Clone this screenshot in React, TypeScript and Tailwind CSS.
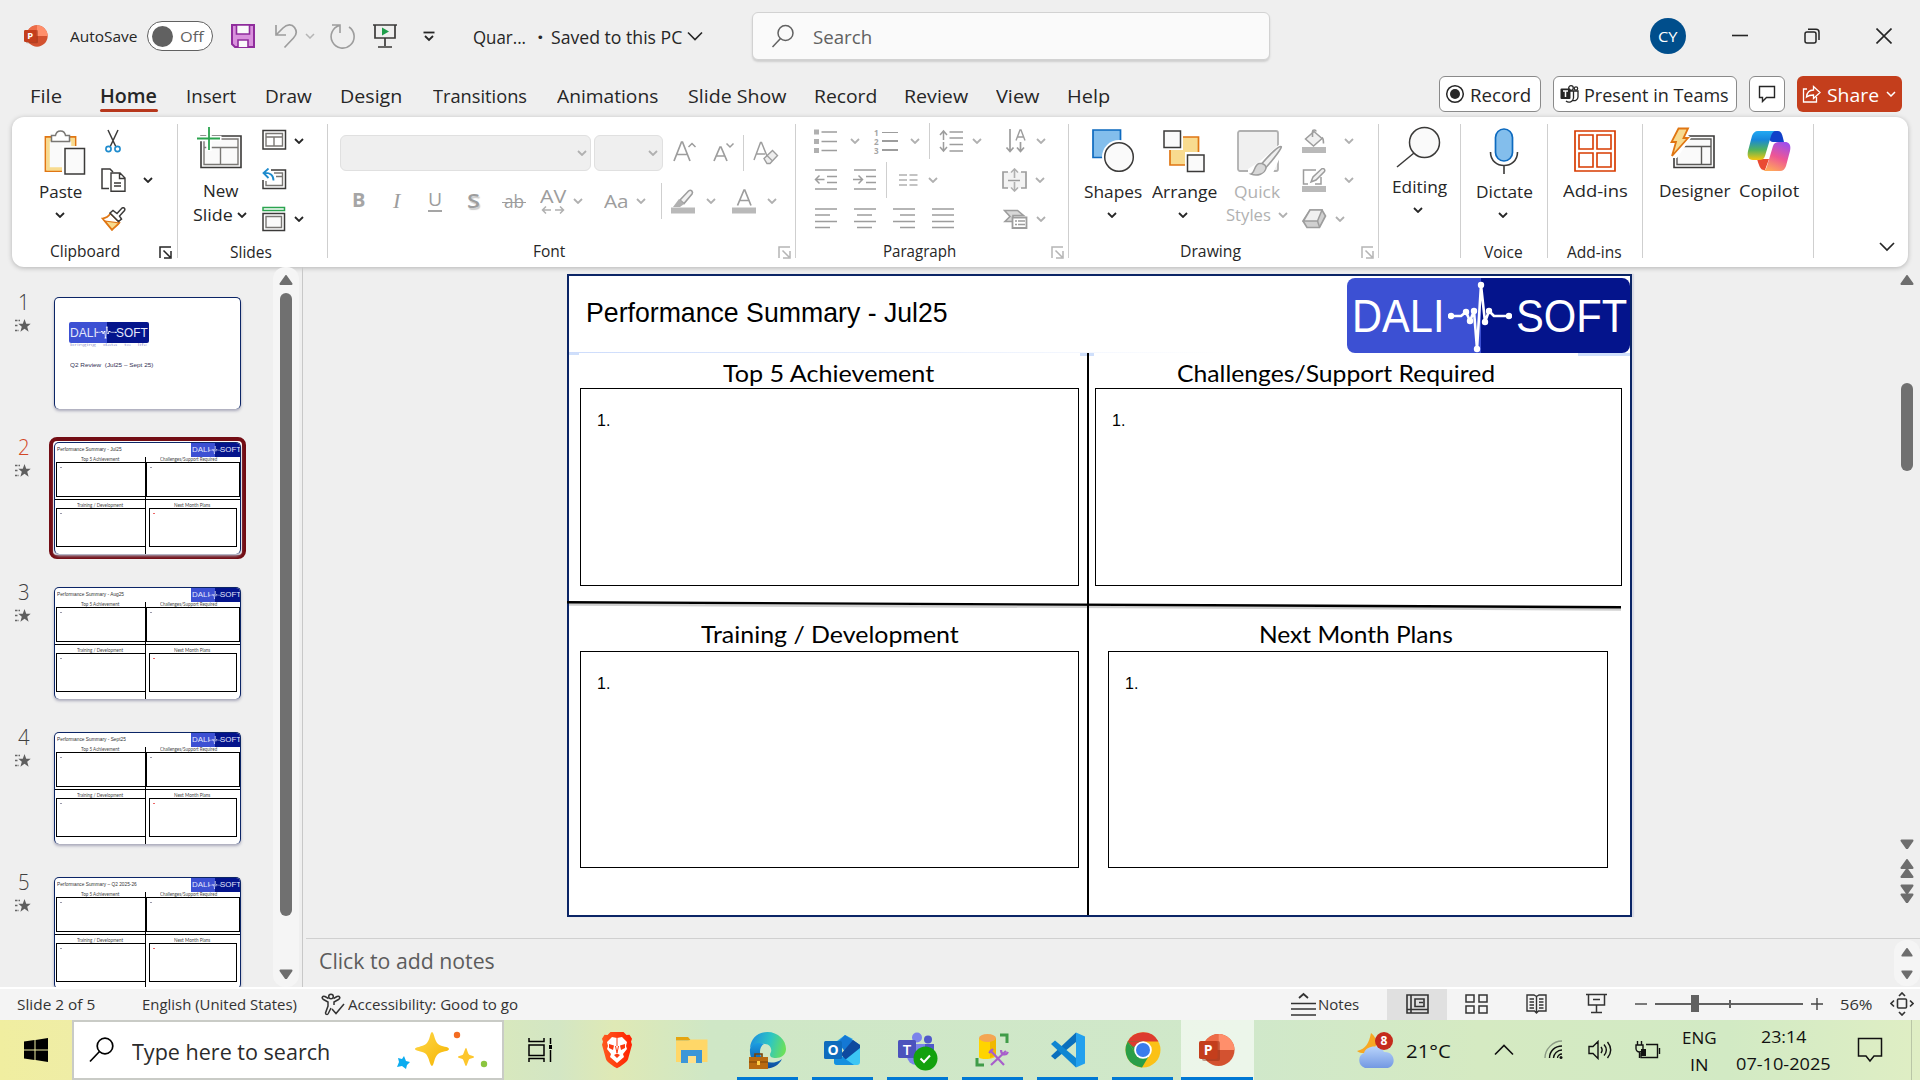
import { useLayoutEffect, useRef, useState, type ReactNode } from 'react';

/* Single line of text stretched or squeezed to the width of its box. */
function Fit({ t, c }: { t: string; c: string }) {
  const outer = useRef<HTMLSpanElement>(null);
  const inner = useRef<HTMLSpanElement>(null);
  const [s, setS] = useState(1);
  useLayoutEffect(() => {
    if (outer.current && inner.current) {
      setS((outer.current.clientWidth + 2) / inner.current.offsetWidth);
    }
  }, [t]);
  return (
    <span ref={outer} className={`block shrink-0 whitespace-pre ${c}`}>
      <span ref={inner} className="-ml-px inline-block origin-left" style={{ transform: `scaleX(${s})` }}>
        {t}
      </span>
    </span>
  );
}

function Svg({ w, h, c = '', children }: { w: number; h: number; c?: string; children: ReactNode }) {
  return (
    <svg width={w} height={h} viewBox={`0 0 ${w} ${h}`} className={`shrink-0 ${c}`} fill="none">
      {children}
    </svg>
  );
}

const DK = '#3b3a39';
const GR = '#9d9d9d';

function Chev({ c = '', g = false }: { c?: string; g?: boolean }) {
  return (
    <Svg w={10} h={6} c={c}>
      <path d="M1 1l4 4 4-4" stroke={g ? '#b0b0b0' : '#262626'} strokeWidth="1.8" />
    </Svg>
  );
}

function Launch({ c, g = false }: { c: string; g?: boolean }) {
  return (
    <Svg w={13} h={13} c={c}>
      <path d="M1 12V1h11M4.500 4.500l6.500 6.500M12 5v7H5" stroke={g ? '#b5b5b5' : '#262626'} strokeWidth="1.500" />
    </Svg>
  );
}

function Sep() {
  return <div className="mt-[7px] h-[134px] w-px shrink-0 bg-[#cfcfcf]" />;
}

const T17 = 'text-[17px] leading-6';
const LABEL = 'text-[15.5px] leading-[22px]';

function PptLogo({ w }: { w: number }) {
  return (
    <svg width={w} height={w} viewBox="0 0 36 36" className="shrink-0">
      <circle cx="19.500" cy="18" r="16" fill="#d35230" />
      <path d="M19.500 2a16 16 0 0 0-16 16h16z" fill="#ed6c47" />
      <path d="M19.500 2a16 16 0 0 1 16 16h-16z" fill="#ff8f6b" />
      <rect x="3" y="9" width="18" height="20" rx="2" fill="#8f2a12" opacity=".45" />
      <rect x="0" y="9" width="18.500" height="18" rx="1.800" fill="#c43e1c" />
      <text x="9.200" y="23" textAnchor="middle" fontSize="14" fontWeight="700" fill="#fff" fontFamily="Open Sans, sans-serif">P</text>
    </svg>
  );
}

function TitleBar() {
  return (
    <header className="flex h-[72px] items-center">
      <div className="ml-6"><PptLogo w={24} /></div>
      <Fit t="AutoSave" c="ml-[23px] w-[66px] text-[15px] leading-6 text-[#262626]" />
      <div className="ml-2.5 flex h-[30px] w-[66px] shrink-0 items-center rounded-full border border-[#616161] bg-white pl-1">
        <div className="size-[21px] rounded-full bg-[#616161]" />
        <Fit t="Off" c="ml-2 w-[22px] text-[15px] leading-6 text-[#616161]" />
      </div>
      <Svg w={26} h={26} c="ml-[17px]">
        <path d="M2 2h22v22H5l-3-3z" fill="#d991dd" stroke="#8f2d9c" strokeWidth="2" />
        <path d="M6.500 2h13v9h-13z" fill="#fafafa" stroke="#8f2d9c" strokeWidth="1.600" />
        <path d="M8 24v-7h10v7" fill="#fafafa" stroke="#8f2d9c" strokeWidth="1.600" />
      </Svg>
      <Svg w={24} h={26} c="ml-[18px]">
        <path d="M2 2v10h10M2.500 11.500L9 5c4-4 9-4 11.500-.500 2.500 3.500 2 7.500-1 10.500L10.500 24.500" stroke={GR} strokeWidth="1.700" />
      </Svg>
      <Svg w={10} h={6} c="ml-[7px]"><path d="M1 1l4 4 4-4" stroke="#b5b5b5" strokeWidth="1.500" /></Svg>
      <Svg w={26} h={26} c="ml-[15px]">
        <path d="M2 2h8v8M9.500 2.500A11.500 11.500 0 1 0 19 4" stroke={GR} strokeWidth="1.600" />
      </Svg>
      <Svg w={26} h={26} c="ml-[16px]">
        <path d="M1 2h24M3 2v13h20V2M13 15v8M6 24h14" stroke={DK} strokeWidth="1.700" />
        <path d="M10 4.500l7 4-7 4z" fill="#1e9e4a" />
      </Svg>
      <Svg w={12} h={12} c="ml-[25px]">
        <path d="M0.500 2.500h11" stroke="#262626" strokeWidth="1.800" /><path d="M2 6l4 4 4-4" stroke="#262626" strokeWidth="1.800" />
      </Svg>
      <Fit t="Quar..." c="ml-[39px] mt-px w-[51px] text-[17.5px] leading-6 text-[#262626]" />
      <Fit t="•" c="ml-[13px] mt-px w-[5px] text-[15px] leading-6 text-[#262626]" />
      <Fit t="Saved to this PC" c="ml-[9px] mt-px w-[129px] text-[17.5px] leading-6 text-[#262626]" />
      <Svg w={16} h={10} c="ml-[6px]"><path d="M1 1.500l7 7 7-7" stroke="#262626" strokeWidth="1.600" /></Svg>
      <div className="ml-[49px] flex h-12 w-[518px] shrink-0 items-center rounded-md border border-[#d2d2d2] bg-[#fafafa] shadow-[0_2px_2px_#cfcfcf]">
        <Svg w={24} h={24} c="ml-[18px]">
          <circle cx="14.500" cy="9" r="7.500" stroke="#616161" strokeWidth="1.500" /><path d="M9.500 14.500l-8 8.500" stroke="#616161" strokeWidth="1.500" />
        </Svg>
        <Fit t="Search" c="ml-[19px] mt-px w-[57px] text-[19px] leading-7 text-[#616161]" />
      </div>
      <div className="ml-[380px] flex size-9 shrink-0 items-center justify-center rounded-full bg-[#004e8c]">
        <Fit t="CY" c="w-[18px] text-[14px] text-white" />
      </div>
      <Svg w={16} h={16} c="ml-[46px]"><path d="M0 7.500h16" stroke="#262626" strokeWidth="1.600" /></Svg>
      <Svg w={16} h={16} c="ml-[56px]">
        <rect x="1" y="4" width="11" height="11" rx="2" stroke="#262626" strokeWidth="1.500" /><path d="M4 1.200h8a3 3 0 0 1 3 3V12" stroke="#262626" strokeWidth="1.500" />
      </Svg>
      <Svg w={16} h={16} c="ml-[56px]"><path d="M.5.500l15 15M15.500.500l-15 15" stroke="#262626" strokeWidth="1.600" /></Svg>
    </header>
  );
}

const TAB = 'text-[19px] leading-7';

function Tabs() {
  return (
    <nav className="flex h-[45px] items-start text-[#262626]">
      <div className="flex pt-[10px]">
        <Fit t="File" c={`ml-[31px] w-[30px] ${TAB}`} />
        <div className="ml-[39px] w-[58px] shrink-0">
          <Fit t="Home" c={`ml-px w-[55px] font-semibold ${TAB}`} />
          <div className="-mt-px h-[3px] w-[58px] rounded-full bg-[#b7371c]" />
        </div>
        <Fit t="Insert" c={`ml-[29px] w-[48px] ${TAB}`} />
        <Fit t="Draw" c={`ml-[31px] w-[45px] ${TAB}`} />
        <Fit t="Design" c={`ml-[30px] w-[60px] ${TAB}`} />
        <Fit t="Transitions" c={`ml-[33px] w-[92px] ${TAB}`} />
        <Fit t="Animations" c={`ml-[32px] w-[99px] ${TAB}`} />
        <Fit t="Slide Show" c={`ml-[32px] w-[96px] ${TAB}`} />
        <Fit t="Record" c={`ml-[30px] w-[61px] ${TAB}`} />
        <Fit t="Review" c={`ml-[29px] w-[62px] ${TAB}`} />
        <Fit t="View" c={`ml-[30px] w-[42px] ${TAB}`} />
        <Fit t="Help" c={`ml-[29px] w-[41px] ${TAB}`} />
      </div>
      <div className="ml-[330px] mt-1 flex h-9">
        <div className="flex h-9 w-[102px] items-center rounded-md border border-[#8a8a8a] bg-white">
          <Svg w={20} h={20} c="ml-[5px]"><circle cx="10" cy="10" r="8.300" stroke="#262626" strokeWidth="1.500" /><circle cx="10" cy="10" r="5" fill="#262626" /></Svg>
          <Fit t="Record" c="ml-[6px] mt-px w-[59px] text-[19px] leading-7" />
        </div>
        <div className="ml-[12px] flex h-9 w-[184px] items-center rounded-md border border-[#8a8a8a] bg-white">
          <Svg w={20} h={20} c="ml-[6px]">
            <circle cx="11" cy="4" r="2.300" stroke="#262626" strokeWidth="1.300" /><circle cx="16" cy="4.500" r="1.700" stroke="#262626" strokeWidth="1.200" />
            <path d="M8 7h10v6a4 4 0 0 1-5 3.500M13.500 7v7a4.500 4.500 0 0 1-7.500 3" stroke="#262626" strokeWidth="1.300" />
            <rect x="0.500" y="4.500" width="10" height="10.500" rx="1" fill="#262626" /><path d="M3 7h5M5.500 7v6" stroke="#fff" strokeWidth="1.500" />
          </Svg>
          <Fit t="Present in Teams" c="ml-[5px] mt-px w-[143px] text-[19px] leading-7" />
        </div>
        <div className="ml-3 flex h-9 w-9 items-center justify-center rounded-md border border-[#8a8a8a] bg-white">
          <Svg w={18} h={18}><path d="M1.500 1.500h15v11H8.500L4.500 16.500v-4h-3z" stroke="#262626" strokeWidth="1.400" /></Svg>
        </div>
        <div className="ml-[12px] flex h-9 w-[105px] items-center rounded-md bg-[#c43e1c] text-white">
          <Svg w={20} h={20} c="ml-[5px]">
            <path d="M5 5H1.500v13h13v-5M4.500 13c.5-5 3-7 7-7V2.500l6.500 6-6.500 6V11c-3 0-5 .3-7 2z" stroke="#fff" strokeWidth="1.300" />
          </Svg>
          <Fit t="Share" c="ml-[6px] mt-px w-[50px] text-[19px] leading-7" />
          <Svg w={10} h={6} c="ml-[8px]"><path d="M1 1l4 4 4-4" stroke="#fff" strokeWidth="1.500" /></Svg>
        </div>
      </div>
    </nav>
  );
}

function Group({ w, body, label }: { w: string; body: ReactNode; label?: ReactNode }) {
  return (
    <div className={`flex shrink-0 flex-col ${w}`}>
      <div className="flex h-[123px] items-start">{body}</div>
      <div className="flex h-6 items-start">{label}</div>
    </div>
  );
}

function ClipboardGroup() {
  return (
    <Group
      w="w-[165px]"
      body={
        <>
          <div className="ml-[29px] w-[44px]">
            <Svg w={42} h={46} c="ml-[3px] mt-[12px]">
              <path d="M1.500 8h30v34h-30z" fill="#fafafa" stroke="#e07613" strokeWidth="1.800" />
              <path d="M4 10.500h25V40H4z" stroke="#f8db8f" strokeWidth="3.500" />
              <path d="M7.500 12.500V6.500h4c1-6 9-6 10 0h4v6z" fill="#fff" stroke="#797774" strokeWidth="1.500" />
              <path d="M18 17h24v28H18z" fill="#fff" /><path d="M21 19.500h19.500v25.500H21z" fill="#fafafa" stroke={DK} strokeWidth="1.500" />
            </Svg>
            <Fit t="Paste" c={`-ml-px mt-[5px] w-[41px] ${T17}`} />
            <Chev c="ml-[14px] mt-[8px]" />
          </div>
          <div className="ml-[16px] flex flex-col gap-[15px] pt-[12px]">
            <Svg w={24} h={24}>
              <path d="M7 1l8 17M17 1L9 18" stroke={DK} strokeWidth="1.500" />
              <circle cx="7.500" cy="20" r="2.600" stroke="#1e8bcd" strokeWidth="1.600" /><circle cx="16.500" cy="20" r="2.600" stroke="#1e8bcd" strokeWidth="1.600" />
            </Svg>
            <Svg w={25} h={24}>
              <path d="M8 20.500H1V1h8l3 3" stroke={DK} strokeWidth="1.500" />
              <path d="M10 5h9l5 5v13.200H10zM18.500 5v5.500H24M13 15h7M13 18h7" stroke={DK} strokeWidth="1.400" />
            </Svg>
            <Svg w={25} h={24}>
              <path d="M1.500 11.500c4-.5 6-2 8-5l9 9c-2 3-5 4.500-7.500 7.500z" fill="#fff" stroke="#e07613" strokeWidth="1.700" />
              <path d="M4 14l14 2-7 6.500z" fill="#f8db8f" stroke="#e07613" strokeWidth="1.200" />
              <path d="M9 6l3-2.500 4 3 5-5.500c2-1 3.500.8 2.500 2.500l-5 5.500 2 3-3 2.500z" fill="#fff" stroke={DK} strokeWidth="1.500" />
            </Svg>
          </div>
          <Chev c="ml-[17px] mt-[60px]" />
        </>
      }
      label={
        <>
          <Fit t="Clipboard" c={`ml-[39px] w-[68px] ${LABEL}`} />
          <Launch c="ml-[40px] mt-[6px]" />
        </>
      }
    />
  );
}

function SlidesGroup() {
  return (
    <Group
      w="w-[149px]"
      body={
        <>
          <div className="ml-[16px] w-[56px]">
            <Svg w={46} h={42} c="ml-[3px] mt-[10px]">
              <path d="M4 9h40v31.500H4z" fill="#fafafa" stroke={DK} strokeWidth="1.600" />
              <path d="M7 20.500h34M23.500 20.500V37M7 12h34v25.500H7z" stroke="#797774" strokeWidth="1.400" />
              <path d="M0 4h3v15H0z" fill="#fff" />
              <path d="M12 0v24M0.500 11.500h24" stroke="#fff" strokeWidth="5.500" />
              <path d="M12 0v23M0 11.500h23" stroke="#2ba44f" strokeWidth="1.800" />
            </Svg>
            <Fit t="New" c={`ml-[10px] mt-[10px] w-[34px] ${T17}`} />
            <div className="flex">
              <Fit t="Slide" c={`w-[38px] ${T17}`} />
              <Chev c="ml-[5px] mt-[9px]" />
            </div>
          </div>
          <div className="ml-[12px] flex flex-col pt-[12px]">
            <Svg w={25} h={24}>
              <path d="M1 1.500h22.500V20H1z" stroke={DK} strokeWidth="1.500" /><path d="M4 4.500h16.500v12.500H4zM4 8h16.500M12 8v9" stroke="#797774" strokeWidth="1.400" />
            </Svg>
            <Svg w={25} h={24} c="mt-[15px]">
              <path d="M9 2h14.500v18.500H1V12" stroke={DK} strokeWidth="1.500" /><path d="M12 5h8.500v12.500H4V13M14 8.500h6.500" stroke="#797774" strokeWidth="1.400" />
              <path d="M6.500.5L1.500 5l5 5M2 5c6-.5 9.500 2 9.500 7.500" stroke="#1e8bcd" strokeWidth="1.800" />
            </Svg>
            <Svg w={25} h={26} c="mt-[14px]">
              <path d="M1 1.500h21.500v3H1z" stroke="#2ba44f" strokeWidth="1.500" />
              <path d="M1 7.500h21.500v17H1z" stroke={DK} strokeWidth="1.500" /><path d="M4 10.500h15.500v11H4z" fill="#fafafa" stroke="#797774" strokeWidth="1.400" />
            </Svg>
          </div>
          <div className="ml-[7px] flex flex-col gap-[72px] pt-[21px]"><Chev /><Chev /></div>
        </>
      }
      label={<Fit t="Slides" c={`ml-[53px] mt-px w-[40px] ${LABEL}`} />}
    />
  );
}

function FontGroup() {
  return (
    <Group
      w="w-[467px]"
      body={
        <div className="pt-[18px] text-[#9d9d9d]">
          <div className="flex h-9 items-center">
            <div className="ml-[12px] flex h-9 w-[251px] items-center justify-end rounded-md border border-[#e0e0e0] bg-[#efefef] pr-[3px]"><Chev g /></div>
            <div className="ml-[3px] flex h-9 w-[69px] items-center justify-end rounded-md border border-[#e0e0e0] bg-[#efefef] pr-[4px]"><Chev g /></div>
            <Svg w={24} h={24} c="ml-[10px]"><path d="M1 20L8.500 1h1L17 20M3.500 13.500h11" stroke={GR} strokeWidth="1.700" /><path d="M15.500 6l3.500-3.500L22.500 6" stroke={GR} strokeWidth="1.500" /></Svg>
            <Svg w={22} h={24} c="ml-[16px]"><path d="M1 20L7 6h1l6 14M3 15h9" stroke={GR} strokeWidth="1.700" /><path d="M13.500 2.500L17 6 20.500 2.500" stroke={GR} strokeWidth="1.500" /></Svg>
            <div className="ml-[8px] h-9 w-px bg-[#cfcfcf]" />
            <Svg w={26} h={26} c="ml-[9px]">
              <path d="M1 20L7.500 2.500h1L14 16M3 14h9" stroke={GR} strokeWidth="1.500" />
              <path d="M11 18.500l8.500-8 5 5L17 23.500h-3z" fill="#eee" stroke={GR} strokeWidth="1.400" /><path d="M14 15.500l5 5" stroke={GR} strokeWidth="1.300" />
            </Svg>
          </div>
          <div className="mt-3 flex h-9 items-center">
            <Fit t="B" c="ml-[25px] -mt-0.5 w-[11px] text-[20px] font-bold leading-6 text-[#a5a5a5]" />
            <span className="-mt-px ml-[29px] w-[12px] font-['Liberation_Serif'] text-[22px] italic leading-6">I</span>
            <div className="ml-[23px] flex w-[14px] flex-col">
              <Fit t="U" c="ml-px w-[12px] text-[18px] leading-[19px]" />
              <div className="mt-px h-[1.5px] bg-[#a5a5a5]" />
            </div>
            <Fit t="S" c="ml-[26px] w-[11px] text-[20px] font-semibold leading-6 [text-shadow:1px_2px_1px_#ccc]" />
            <div className="ml-[23px] grid w-6 items-center">
              <Fit t="ab" c="col-start-1 row-start-1 ml-[3px] w-[18px] text-[18px] leading-6" />
              <div className="col-start-1 row-start-1 mt-[3px] h-[1.5px] bg-[#9d9d9d]" />
            </div>
            <div className="ml-[15px] flex w-6 flex-col">
              <Fit t="AV" c="-mt-0.5 w-[24px] text-[19px] leading-[18px]" />
              <Svg w={24} h={8} c="mt-px"><path d="M5 .5L1.500 4 5 7.500M1.500 4H10M19 .5L22.500 4 19 7.500M22.500 4H14" stroke="#b0b0b0" strokeWidth="1.500" /></Svg>
            </div>
            <Chev g c="ml-[8px]" />
            <Fit t="Aa" c="ml-[22px] w-[23px] text-[19px] leading-6" />
            <Chev g c="ml-[8px]" />
            <div className="ml-[15px] h-9 w-px bg-[#cfcfcf]" />
            <Svg w={24} h={26} c="ml-[9px]">
              <path d="M9 12l8.500-9c2.500-2 5 .5 3.500 3l-8 9.500z" fill="#f1f1f1" stroke={GR} strokeWidth="1.600" /><path d="M2 19l6-8 5 5-4 3z" fill="#b0b0b0" /><path d="M0 19.500h24v6H0z" fill="#b9b9b9" />
            </Svg>
            <Chev g c="ml-[11px]" />
            <Svg w={24} h={26} c="ml-[16px]"><path d="M5.500 17.500L12 2h.8L19 17.500M8 12.500h9" stroke={GR} strokeWidth="1.700" /><path d="M0 19.500h24v6H0z" fill="#b9b9b9" /></Svg>
            <Chev g c="ml-[11px]" />
          </div>
        </div>
      }
      label={
        <>
          <Fit t="Font" c={`ml-[206px] w-[30px] ${LABEL}`} />
          <Launch g c="ml-[214px] mt-[6px]" />
        </>
      }
    />
  );
}

function Lines({ d, c = '' }: { d: string; c?: string }) {
  return (
    <Svg w={24} h={24} c={c}>
      <path d={d} stroke={GR} strokeWidth="1.500" />
    </Svg>
  );
}

function ParagraphGroup() {
  return (
    <Group
      w="w-[272px]"
      body={
        <div className="pt-[6px]">
          <div className="flex h-9 items-center">
            <Svg w={24} h={24} c="ml-[18px]"><path d="M0 .5h5v5H0zM0 10h5v5H0zM0 19h5v5H0z" fill="#b0b0b0" /><path d="M7.500 3H23M7.500 12.500H23M7.500 21.500H23" stroke={GR} strokeWidth="1.500" /></Svg>
            <Chev g c="ml-[12px]" />
            <div className="ml-[14px] flex h-[27px] w-6 shrink-0">
              <div className="flex w-[7px] flex-col text-[8px] font-bold leading-[9px] text-[#a5a5a5]"><span>1</span><span>2</span><span>3</span></div>
              <div className="flex flex-1 flex-col justify-between py-[4px] pl-px"><div className="h-[1.5px] bg-[#9d9d9d]" /><div className="h-[1.5px] bg-[#9d9d9d]" /><div className="h-[1.5px] bg-[#9d9d9d]" /></div>
            </div>
            <Chev g c="ml-[12px]" />
            <div className="ml-[9px] h-9 w-px bg-[#cfcfcf]" />
            <Svg w={24} h={24} c="ml-[9px]"><path d="M10.500 3H24M10.500 9H24M10.500 15.500H24M10.500 22H24M1 6l3.500-4L8 6M4.500 2v9M1 18l3.500 4L8 18M4.500 22v-9" stroke={GR} strokeWidth="1.500" /></Svg>
            <Chev g c="ml-[9px]" />
            <Svg w={22} h={24} c="ml-[23px]">
              <path d="M5 0v22M1.500 18.500L5 22.500l3.500-4M15.500 13v9M12 18.500l3.500 4 3.500-4" stroke={GR} strokeWidth="1.700" /><path d="M11 11.500l4-10.500h1l4 10.500M12.500 8h6.500" stroke={GR} strokeWidth="1.400" />
            </Svg>
            <Chev g c="ml-[9px]" />
          </div>
          <div className="mt-[3px] flex h-9 items-center">
            <Lines c="ml-[18px]" d="M1 2h22M13 8.500h10M13 14.500h10M1 21h22M10.500 11.500H2M5.500 7.500L1.500 11.500l4 4" />
            <Lines c="ml-[15px]" d="M1 2h22M13 8.500h10M13 14.500h10M1 21h22M0 11.500h9M5.500 7.500l4 4-4 4" />
            <div className="ml-[9px] h-9 w-px bg-[#cfcfcf]" />
            <Svg w={20} h={14} c="ml-[12px]"><path d="M0 2h8M10.500 2h8M0 7h8M10.500 7h8M0 12h8M10.500 12h8" stroke="#b0b0b0" strokeWidth="1.500" /></Svg>
            <Chev g c="ml-[9px]" />
            <Svg w={25} h={24} c="ml-[64px]"><path d="M1 4h23v16H1z" fill="#f3f3f3" /><path d="M6 4H1v16h5M19 4h5v16h-5" stroke={GR} strokeWidth="1.700" /><path d="M6 12.500h12" stroke={GR} strokeWidth="1.500" /><path d="M12.500 1v9M9 4.500L12.500 1 16 4.500M12.500 14v9M9 19.500l3.500 3.500 3.500-3.500" stroke="#b0b0b0" strokeWidth="1.600" /></Svg>
            <Chev g c="ml-[8px]" />
          </div>
          <div className="mt-[3px] flex h-9 items-center">
            <Lines c="ml-[18px]" d="M1 2h22M1 8h15M1 14.500h22M1 20.500h15" />
            <Lines c="ml-[15px]" d="M1 2h22M4 8h15M1 14.500h22M4 20.500h15" />
            <Lines c="ml-[15px]" d="M1 2h22M8 8h15M1 14.500h22M8 20.500h15" />
            <Lines c="ml-[15px]" d="M1 2h22M1 8h22M1 14.500h22M1 20.500h22" />
            <Svg w={25} h={24} c="ml-[48px]">
              <path d="M1.500 3.500h13l6 5H10v6H2l5-5z" fill="#d8d8d8" stroke={GR} strokeWidth="1.600" /><path d="M9.500 10.500h14V21h-14z" fill="#fff" stroke={GR} strokeWidth="1.800" /><path d="M12 14h2M15 14h7M12 17.500h2M15 17.500h7" stroke={GR} strokeWidth="1.400" />
            </Svg>
            <Chev g c="ml-[8px]" />
          </div>
        </div>
      }
      label={
        <>
          <Fit t="Paragraph" c={`ml-[88px] w-[71px] ${LABEL}`} />
          <Launch g c="ml-[96px] mt-[6px]" />
        </>
      }
    />
  );
}

function DrawingGroup() {
  return (
    <Group
      w="w-[309px]"
      body={
        <>
          <div className="ml-[16px] w-[56px]">
            <Svg w={44} h={44} c="ml-[6px] mt-[11px]">
              <path d="M2 2h27.500v27.500H2z" fill="#83beec" stroke="#0d6abf" strokeWidth="1.700" /><circle cx="28" cy="29" r="17" fill="#fff" /><circle cx="28" cy="29" r="14.300" fill="#fafafa" stroke={DK} strokeWidth="1.500" />
            </Svg>
            <Fit t="Shapes" c={`mt-[8px] w-[56px] ${T17}`} />
            <Chev c="ml-[22px] mt-[8px]" />
          </div>
          <div className="ml-[12px] w-[63px]">
            <Svg w={44} h={44} c="ml-[9px] mt-[12px]">
              <path d="M8 8h28.500v28H8z" fill="#f8db8f" stroke="#e07613" strokeWidth="1.700" />
              <path d="M0 0h21v21H0zM23 23h21v21H23z" fill="#fff" /><path d="M2 2h16.500v16.500H2zM25.500 26h16.500v16.500H25.500z" fill="#fafafa" stroke={DK} strokeWidth="1.500" />
            </Svg>
            <Fit t="Arrange" c={`mt-[7px] w-[63px] ${T17}`} />
            <Chev c="ml-[25px] mt-[8px]" />
          </div>
          <div className="ml-[11px] w-[60px] text-[#b1b1b1]">
            <Svg w={46} h={48} c="ml-[10px] mt-[12px]">
              <rect x="1" y="2" width="40" height="40" rx="2" fill="#f0f0f0" stroke="#b0b0b0" strokeWidth="1.800" />
              <path d="M44 14L22 33 11 40v4h25l8-18z" fill="#fff" />
              <path d="M44 17.500c2 0-6 11-15 21l-4-4C34 24 42 17 44 17.500z" fill="#f0f0f0" stroke={GR} strokeWidth="1.600" /><path d="M25 34.500c3 1 4 2 4 4.500-1 6-9 8.500-15 6 4-1 3-9 8-10.500z" fill="#d8d8d8" stroke={GR} strokeWidth="1.500" />
            </Svg>
            <Fit t="Quick" c={`ml-[8px] mt-[3px] w-[44px] ${T17}`} />
            <div className="-mt-px flex">
              <Fit t="Styles" c={`w-[43px] ${T17}`} />
              <Chev g c="ml-[8px] mt-[9px]" />
            </div>
          </div>
          <div className="ml-[15px] w-[53px] pt-[12px]">
            <div className="flex items-start">
              <Svg w={24} h={24}><path d="M12 2.500l8 7-8.500 7.500-8-7z" fill="#f0f0f0" stroke={GR} strokeWidth="1.500" /><path d="M10.500 8V2.500c0-2 3.500-2 3.500 0M20 8.500c1.500 1 1.500 3 1.500 6" stroke={GR} strokeWidth="1.600" /><path d="M0 18h24v6H0z" fill="#b9b9b9" /></Svg>
              <Chev g c="ml-[18px] mt-[9px]" />
            </div>
            <div className="mt-[15px] flex items-start">
              <Svg w={24} h={24}><path d="M14 2H1.500v14H6M19 9v7h-6" stroke={GR} strokeWidth="1.500" /><path d="M9 14l2-5 8.500-8c2-1.500 4 .5 3 2.500L14 12z" fill="#f0f0f0" stroke={GR} strokeWidth="1.500" /><path d="M0 18h24v6H0z" fill="#b9b9b9" /></Svg>
              <Chev g c="ml-[18px] mt-[9px]" />
            </div>
            <div className="mt-[15px] flex items-start">
              <Svg w={25} h={24}><path d="M8 3h12l3.500 6-6 11.500H5L1 14z" fill="#d0d0d0" stroke={GR} strokeWidth="1.700" /><path d="M8 3h12l-4.500 11H1.500z" fill="#f0f0f0" stroke={GR} strokeWidth="1.500" /><path d="M15.500 14l2 6" stroke={GR} strokeWidth="1.500" /></Svg>
              <Chev g c="ml-[8px] mt-[9px]" />
            </div>
          </div>
        </>
      }
      label={
        <>
          <Fit t="Drawing" c={`ml-[112px] w-[59px] ${LABEL}`} />
          <Launch g c="ml-[121px] mt-[6px]" />
        </>
      }
    />
  );
}

function Ribbon() {
  return (
    <section className="ml-3 flex h-[150px] w-[1896px] shrink-0 rounded-xl bg-white text-[#262626] shadow-[0_1px_5px_rgba(0,0,0,0.25)]">
      <ClipboardGroup />
      <Sep />
      <SlidesGroup />
      <Sep />
      <FontGroup />
      <Sep />
      <ParagraphGroup />
      <Sep />
      <DrawingGroup />
      <Sep />
      <Group
        w="w-[81px]"
        body={
          <div className="ml-[14px]">
            <Svg w={46} h={46} c="ml-[3px] mt-[9px]"><circle cx="28.500" cy="16.500" r="15" fill="#fafafa" stroke={DK} strokeWidth="1.500" /><path d="M18 27L1 41" stroke={DK} strokeWidth="1.500" /></Svg>
            <Fit t="Editing" c={`mt-[3px] w-[53px] ${T17}`} />
            <Chev c="ml-[20px] mt-[8px]" />
          </div>
        }
      />
      <Sep />
      <Group
        w="w-[86px]"
        body={
          <div className="ml-[16px]">
            <Svg w={30} h={48} c="ml-[12px] mt-[10px]">
              <rect x="6.500" y="2" width="17" height="32" rx="8.500" fill="#83beec" stroke="#0d6abf" strokeWidth="1.700" /><path d="M1.500 25c0 18 27 18 27 0M15 38.500V47" stroke={DK} strokeWidth="1.600" />
            </Svg>
            <Fit t="Dictate" c={`mt-[5px] w-[55px] ${T17}`} />
            <Chev c="ml-[21px] mt-[8px]" />
          </div>
        }
        label={<Fit t="Voice" c={`ml-[24px] mt-px w-[37px] ${LABEL}`} />}
      />
      <Sep />
      <Group
        w="w-[94px]"
        body={
          <div className="ml-[16px]">
            <Svg w={42} h={42} c="ml-[10px] mt-[13px]"><path d="M1 1h40v40H1z" stroke="#d83b01" strokeWidth="1.700" /><path d="M5 5h14v14H5zM23 5h14v14H23zM5 23h14v14H5zM23 23h14v14H23z" stroke="#d83b01" strokeWidth="1.600" /></Svg>
            <Fit t="Add-ins" c={`mt-[7px] w-[63px] ${T17}`} />
          </div>
        }
        label={<Fit t="Add-ins" c={`ml-[20px] mt-px w-[53px] ${LABEL}`} />}
      />
      <Sep />
      <Group
        w="w-[170px]"
        body={
          <>
            <div className="ml-[17px]">
              <Svg w={46} h={42} c="ml-[10px] mt-[10px]">
                <path d="M4 9h40v31.500H4z" fill="#fafafa" stroke={DK} strokeWidth="1.600" /><path d="M7 12h34v25.500H7zM7 19.500h34M31.500 19.500V37" stroke="#5a5957" strokeWidth="1.400" />
                <path d="M0 0h20l-2 8 3 3-14 20H0z" fill="#fff" /><path d="M8.500 1.500H18L13.500 11H18L2 29l4-14H1.500z" fill="#f8db8f" stroke="#e07613" strokeWidth="1.800" />
              </Svg>
              <Fit t="Designer" c={`mt-[10px] w-[69px] ${T17}`} />
            </div>
            <div className="ml-[11px]">
              <Svg w={44} h={42} c="ml-[7px] mt-[13px]">
                <defs>
                  <linearGradient id="cpa" x1="0" y1="0" x2="0" y2="1"><stop offset="0" stopColor="#22a9f2" /><stop offset=".3" stopColor="#1787dc" /><stop offset=".65" stopColor="#52b35c" /><stop offset="1" stopColor="#f8c60f" /></linearGradient>
                  <linearGradient id="cpb" x1=".7" y1="0" x2=".3" y2="1"><stop offset="0" stopColor="#a14eea" /><stop offset=".5" stopColor="#ee5694" /><stop offset="1" stopColor="#ffa95a" /></linearGradient>
                </defs>
                <path d="M23 1h8c3 0 4 3 5 7l1 4H26c-4 0-4-4-4-7z" fill="#1140c9" />
                <path d="M10 29h12l-4 11h-1c-4 0-5-5-7-11z" fill="#ea4b32" />
                <path d="M11 1h18c-3 0-4 2-5 5l-6 20c-1 3-3 4-6 4H6C1 30 0 26 1 21L5 6c1-3 3-5 6-5z" fill="url(#cpa)" />
                <path d="M33 41H15c3 0 4-2 5-5l6-20c1-3 3-4 6-4h6c5 0 6 4 5 9l-4 15c-1 3-3 5-6 5z" fill="url(#cpb)" />
              </Svg>
              <Fit t="Copilot" c={`mt-[7px] w-[58px] ${T17}`} />
            </div>
          </>
        }
      />
      <Sep />
      <Svg w={16} h={10} c="ml-[65px] mt-[125px]"><path d="M1 1l7 7 7-7" stroke="#262626" strokeWidth="1.700" /></Svg>
    </section>
  );
}

/* The pulse trace between the two halves of the company name. */
function Pulse({ c }: { c: string }) {
  return (
    <svg viewBox="0 0 64 74" preserveAspectRatio="none" className={c} fill="none">
      <path d="M3 37h10l5-4 4 9 4-10 3 38L33 6l4 37 4-11 5 5h15" stroke="#fff" strokeWidth="2.600" strokeLinejoin="round" />
      {[[3, 37], [18, 33], [22, 42], [26, 32], [29, 70], [33, 6], [37, 43], [41, 32], [61, 37]].map(([x, y]) => (
        <circle key={`${x}-${y}`} cx={x} cy={y} r="3.200" fill="#fff" />
      ))}
    </svg>
  );
}

const H = "absolute font-['Lato'] text-[23px] leading-8 text-black";
const N = "absolute font-['Liberation_Sans'] text-[16px] leading-5 text-black";

function Slide() {
  return (
    <div className="relative h-[643px] w-[1065px] shrink-0 border-2 border-[#0b2566] bg-white font-['Liberation_Sans'] text-black shadow-[2px_0_1px_#d8dae4]">
      <Fit t="Performance Summary - Jul25" c="absolute left-[18px] top-[21px] w-[360px] text-[28px] leading-8" />
      <div className="absolute left-[778px] top-[2px] flex h-[75px] w-[283px] items-center overflow-hidden rounded-lg bg-[linear-gradient(90deg,#3c50d3_47.4%,#04148c_47.4%)] text-white">
        <Fit t="DALI" c="ml-[6px] w-[91px] text-[47px] leading-[56px]" />
        <Pulse c="ml-[4px] h-[74px] w-[64px] shrink-0" />
        <Fit t="SOFT" c="ml-[5px] w-[109px] text-[47px] leading-[56px]" />
      </div>
      <div className="absolute left-0 top-[76px] h-px w-[660px] bg-[linear-gradient(90deg,#cddcfb,#ffffff)]" />
      <div className="absolute left-0 top-[77px] h-0.5 w-[10px] bg-[#cfdffb]" />
      <div className="absolute left-[511px] top-[77px] h-[3px] w-[14px] bg-[#cfdffb]" />
      <div className="absolute left-[1009px] top-[77px] h-[3px] w-[52px] bg-[#cfdffb]" />
      <Fit t="Top 5 Achievement" c={`${H} left-[155px] top-[81px] w-[209px]`} />
      <Fit t="Challenges/Support Required" c={`${H} left-[609px] top-[81px] w-[316px]`} />
      <Fit t="Training / Development" c={`${H} left-[133px] top-[342px] w-[256px]`} />
      <Fit t="Next Month Plans" c={`${H} left-[691px] top-[342px] w-[192px]`} />
      <div className="absolute left-[11px] top-[112px] h-[198px] w-[499px] border border-black" />
      <div className="absolute left-[526px] top-[112px] h-[198px] w-[527px] border border-black" />
      <div className="absolute left-[11px] top-[375px] h-[217px] w-[499px] border border-black" />
      <div className="absolute left-[539px] top-[375px] h-[217px] w-[500px] border border-black" />
      <Fit t="1." c={`${N} left-[29px] top-[135px] w-[11px]`} />
      <Fit t="1." c={`${N} left-[544px] top-[135px] w-[11px]`} />
      <Fit t="1." c={`${N} left-[29px] top-[398px] w-[11px]`} />
      <Fit t="1." c={`${N} left-[557px] top-[398px] w-[11px]`} />
      <svg width="1056" height="12" className="absolute left-[-2px] top-[323px]">
        <path d="M2 5.500L1054 10.500" stroke="#d0d0d0" strokeWidth="2.500" /><path d="M0 3.200L1054 8.200" stroke="#000" strokeWidth="2.400" />
      </svg>
      <div className="absolute left-[518px] top-[77px] h-[562px] w-[2px] bg-black" />
    </div>
  );
}

const TH = "absolute font-['Lato'] text-[6px] leading-[6px] text-[#444]";

function Star() {
  return (
    <Svg w={17} h={14} c="ml-[14px] mt-[2px]">
      <path d="M10.500 0l1.700 4.800h4.500l-3.500 3 1.400 5-4.100-3-4.100 3 1.400-5-3.500-3h4.500z" fill="#5f5f5f" />
      <path d="M1 1.500h5M1 6.500h2.500M1 11.500h4" stroke="#666" strokeWidth="1.300" strokeDasharray="2.500 1" />
    </Svg>
  );
}

function MiniLogo({ c, a, b }: { c: string; a: string; b: string }) {
  return (
    <div className={`absolute flex items-center overflow-hidden bg-[linear-gradient(90deg,#3c50d3_48%,#04148c_48%)] font-['Liberation_Sans'] text-[#e4e8fb] ${c}`}>
      <Fit t="DALI" c={a} />
      <Pulse c="h-[60%] min-w-0 flex-1" />
      <Fit t="SOFT" c={b} />
    </div>
  );
}

function Thumb({ title, tw }: { title: string; tw: string }) {
  return (
    <div className="relative h-[112px] w-[187px] overflow-hidden rounded-[5px] border-x border-t border-[#0b2566] bg-white shadow-[0_2px_3px_#aab]">
      <Fit t={title} c={`absolute left-[3px] top-[3px] font-['Liberation_Sans'] text-[5.5px] leading-[7px] text-[#333] ${tw}`} />
      <MiniLogo c="left-[136px] top-0 h-[14px] w-[50px]" a="ml-[2px] w-[16px] text-[7.5px] leading-[12px]" b="mr-px w-[19px] text-[7.5px] leading-[12px]" />
      <Fit t="Top 5 Achievement" c={`${TH} left-[27px] top-[13px] w-[36px]`} />
      <Fit t="Challenges/Support Required" c={`${TH} left-[106px] top-[13px] w-[55px]`} />
      <Fit t="Training / Development" c={`${TH} left-[23px] top-[59px] w-[44px]`} />
      <Fit t="Next Month Plans" c={`${TH} left-[120px] top-[59px] w-[34px]`} />
      <div className="absolute left-px top-[19px] h-[35px] w-[90px] border border-black" />
      <div className="absolute left-[91px] top-[19px] h-[35px] w-[94px] border border-black" />
      <div className="absolute left-px top-[65px] h-[39px] w-[90px] border border-black" />
      <div className="absolute left-[94px] top-[65px] h-[39px] w-[88px] border border-black" />
      <div className="absolute left-0 top-[56px] h-px w-[185px] bg-black" />
      <div className="absolute left-[90px] top-[14px] h-[98px] w-px bg-black" />
      <div className="absolute left-[5px] top-[24px] h-px w-0.5 bg-[#99a]" />
      <div className="absolute left-[95px] top-[24px] h-px w-0.5 bg-[#99a]" />
      <div className="absolute left-[5px] top-[70px] h-px w-0.5 bg-[#99a]" />
      <div className="absolute left-[98px] top-[70px] h-px w-0.5 bg-[#e66]" />
    </div>
  );
}

function PanelRow({ n, on = false, children }: { n: string; on?: boolean; children: ReactNode }) {
  return (
    <div className="flex h-[145px] shrink-0 items-start">
      <div className="w-[49px] pt-[3px]">
        <Fit t={n} c={`ml-[19px] w-[10px] text-[22px] font-light leading-8 ${on ? 'text-[#d24726]' : 'text-[#404040]'}`} />
        <Star />
      </div>
      <div className={`mt-[10px] rounded-[8px] border-4 p-px ${on ? 'border-[#730d14] bg-white' : 'border-transparent'}`}>{children}</div>
    </div>
  );
}

function Tri({ down = false, s = 14, c = '' }: { down?: boolean; s?: number; c?: string }) {
  return (
    <svg width={s} height={s * 0.75} viewBox="0 0 14 10" preserveAspectRatio="none" className={`shrink-0 ${c}`}>
      <path d={down ? 'M7 9L1.500 1.500h11z' : 'M7 1L1.500 8.500h11z'} fill="#6e6e6e" stroke="#6e6e6e" strokeWidth="2" strokeLinejoin="round" />
    </svg>
  );
}

function SlidePanel() {
  return (
    <aside className="flex h-[720px] w-[303px] shrink-0 overflow-hidden border-r border-[#c8c8c8]">
      <div className="flex w-[273px] shrink-0 flex-col overflow-hidden pt-[15px]">
        <PanelRow n="1">
          <div className="relative h-[112px] w-[187px] rounded-[5px] border-x border-t border-[#0b2566] bg-white shadow-[0_2px_3px_#aab]">
            <MiniLogo c="left-[14px] top-[24px] h-[21px] w-[80px] rounded-[2px]" a="ml-[2px] w-[25px] text-[13px] leading-[18px]" b="mr-[2px] w-[30px] text-[13px] leading-[18px]" />
            <Fit t="bringing    data    to    life" c="absolute left-[16px] top-[45px] w-[76px] text-[4px] leading-[4px] text-[#9a9ad0]" />
            <Fit t="Q2 Review  (Jul25 – Sept 25)" c="absolute left-[16px] top-[63px] w-[81px] font-['Liberation_Sans'] text-[6px] leading-[9px] text-[#333355]" />
          </div>
        </PanelRow>
        <PanelRow n="2" on><Thumb title="Performance Summary - Jul25" tw="w-[63px]" /></PanelRow>
        <PanelRow n="3"><Thumb title="Performance Summary - Aug25" tw="w-[65px]" /></PanelRow>
        <PanelRow n="4"><Thumb title="Performance Summary - Sept25" tw="w-[67px]" /></PanelRow>
        <PanelRow n="5"><Thumb title="Performance Summary – Q2 2025-26" tw="w-[78px]" /></PanelRow>
      </div>
      <div className="flex w-[26px] flex-col items-center rounded-xl bg-[#f5f5f5] pt-[8px]">
        <Tri />
        <div className="mt-[7px] h-[623px] w-3 shrink-0 rounded-full bg-[#707070]" />
        <Tri down c="mt-[53px]" />
      </div>
    </aside>
  );
}

const ST = '-mt-0.5 text-[15px] leading-6';

function StatusBar() {
  return (
    <div className="flex h-[33px] shrink-0 items-center border-t-2 border-white bg-[#f4f4f4] text-[#333]">
      <Fit t="Slide 2 of 5" c={`ml-[18px] w-[76px] ${ST}`} />
      <Fit t="English (United States)" c={`ml-[49px] w-[153px] ${ST}`} />
      <Svg w={24} h={24} c="-mt-0.5 ml-[25px]">
        <circle cx="10" cy="4.500" r="2.300" stroke="#333" strokeWidth="1.500" />
        <path d="M7.500 6.500L4 4.500C1.500 3.500 0 6 2.500 7.500L7 10v4l-2.500 7c0 1.500 2 2 2.800.5L10 16M12.500 6.500L16 4.500c2.500-1 4 1.500 1.500 3L13 10v3M11 17l4 4.500 8-9.500" stroke="#333" strokeWidth="1.500" />
      </Svg>
      <Fit t="Accessibility: Good to go" c={`ml-[4px] w-[168px] ${ST}`} />
      <Svg w={26} h={26} c="-mt-px ml-[774px]"><path d="M0 12.500h25M0 18h25M0 24h25" stroke="#333" strokeWidth="1.700" /><path d="M8 7l4.500-4L17 7" stroke="#333" strokeWidth="1.800" /></Svg>
      <Fit t="Notes" c={`ml-[2px] w-[39px] ${ST}`} />
      <div className="ml-[29px] flex h-full w-[60px] items-center justify-center bg-[#e0e0e0] pb-0.5">
        <Svg w={23} h={20}><path d="M1 1h21v18H1zM5 1v18M1 15.500h21" stroke="#333" strokeWidth="1.600" /><path d="M9 5h9v7.500H9zM13 8.500h4" stroke="#333" strokeWidth="1.600" /></Svg>
      </div>
      <Svg w={23} h={20} c="-mt-0.5 ml-[18px]"><path d="M1 1h8v7H1zM14 1h8v7h-8zM1 12h8v7H1zM14 12h8v7h-8z" stroke="#333" strokeWidth="1.500" /></Svg>
      <Svg w={21} h={20} c="-mt-0.5 ml-[38px]"><path d="M10.500 2.500L8 1H1v16h7.500l2 2 2-2H20V1h-7zV19M3.500 5H8M3.500 8H8M3.500 11H8M3.500 14H8M13 5h4.500M13 8h4.500M13 11h4.500M13 14h4.500" stroke="#333" strokeWidth="1.400" /></Svg>
      <Svg w={21} h={21} c="-mt-0.5 ml-[39px]"><path d="M0 1.500h21M2.500 1.500V12h16V1.500M7 6.500h7M10.500 12v7.500M5 19.500h11" stroke="#333" strokeWidth="1.500" /></Svg>
      <Svg w={12} h={12} c="-mt-0.5 ml-[28px]"><path d="M0 6h12" stroke="#444" strokeWidth="1.400" /></Svg>
      <div className="-mt-0.5 ml-[8px] flex w-[148px] shrink-0 items-center">
        <div className="h-0.5 w-[36px] bg-[#616161]" />
        <div className="h-[17px] w-2 bg-[#616161]" />
        <div className="h-0.5 w-[30px] bg-[#616161]" />
        <div className="h-2 w-0.5 bg-[#616161]" />
        <div className="h-0.5 flex-1 bg-[#616161]" />
      </div>
      <Svg w={12} h={12} c="-mt-0.5 ml-[8px]"><path d="M0 6h12M6 0v12" stroke="#444" strokeWidth="1.400" /></Svg>
      <Fit t="56%" c={`ml-[18px] w-[31px] ${ST}`} />
      <Svg w={24} h={24} c="-mt-0.5 ml-[18px]"><rect x="7.500" y="7" width="9" height="9" rx="1" stroke="#333" strokeWidth="1.600" /><path d="M9 4l3-3 3 3M9 20l3 3 3-3M4 8.500l-3 3 3 3M20 8.500l3 3-3 3" stroke="#333" strokeWidth="1.700" /></Svg>
    </div>
  );
}

function TaskApp({ w, c = '', on = false, children }: { w: string; c?: string; on?: boolean; children: ReactNode }) {
  return (
    <div className={`flex h-full shrink-0 flex-col items-center ${w} ${c} ${on ? 'bg-white/60' : ''}`}>
      <div className="flex h-[57px] items-center pt-[3px]">{children}</div>
      <div className="h-[3px] w-full bg-[#0078d4]" />
    </div>
  );
}

function Taskbar() {
  return (
    <footer className="flex h-[60px] shrink-0 items-center bg-[linear-gradient(90deg,#f0eea0_0%,#efeda6_4%,#dbe9b8_24%,#d3e6c4_29%,#dfe9b5_32%,#cfe7c6_37%,#d0e8ca_65%,#d5eac2_77%,#d2eac4_90%,#dfeec4_100%)] text-[#111]">
      <Svg w={24} h={24} c="ml-6"><path d="M0 3.500L10.500 2v9.500H0zM11.500 1.900L24 0v11.500H11.500zM0 12.500h10.500V22L0 20.500zM11.500 12.500H24V24l-12.500-1.900z" fill="#000" /></Svg>
      <div className="ml-6 flex h-[60px] w-[432px] shrink-0 items-center border-2 border-[#c9cbc6] bg-white">
        <Svg w={26} h={26} c="ml-[15px]"><circle cx="16" cy="9" r="7.800" stroke="#000" strokeWidth="1.700" /><path d="M10.500 14.500L1 24.500" stroke="#000" strokeWidth="1.700" /></Svg>
        <Fit t="Type here to search" c="ml-[18px] mt-[3px] w-[196px] text-[21px] leading-7 text-[#2b2b2b]" />
        <Svg w={94} h={40} c="ml-[68px]">
          <defs><linearGradient id="gold" x1="0" y1="0" x2="1" y2="1"><stop offset="0" stopColor="#ffd84a" /><stop offset="1" stopColor="#f5b400" /></linearGradient></defs>
          <path d="M35 2c2 0 2.500 9 6 12s11 2.500 11 5-7 2-11 5-4 12-6 12-3-9-6-12-11-3-11-5 7-2 11-5 4-12 6-12z" fill="url(#gold)" />
          <path d="M69 18c1 0 1.500 5 3 6.500s5 1 5 2.500-4 1-5 2.500-2 6.500-3 6.500-2-5-3-6.500-5-1-5-2.500 4-1 5-2.500 2-6.500 3-6.500z" fill="#fdc62c" />
          <path d="M7 26l2 5 4 1-3 3-1 4-4-3-5 1 2-5-1-4 4 1z" fill="#0cacf0" />
          <circle cx="60" cy="5" r="3.200" fill="#f36c21" /><circle cx="87" cy="34" r="3.200" fill="#8bc53f" />
        </Svg>
      </div>
      <Svg w={24} h={24} c="ml-6"><path d="M1 0v3.500h15V0M1 7h15v10.500H1zM1 24v-3.500h15V24M22.500 0v6M22.500 12v12" stroke="#000" strokeWidth="1.500" /><path d="M21 7h3v4h-3z" fill="#000" /></Svg>
      <Svg w={32} h={38} c="ml-[49px]">
        <defs><linearGradient id="brv"><stop offset="0" stopColor="#ff5a1e" /><stop offset="1" stopColor="#ff2000" /></linearGradient></defs>
        <path d="M9.500 1h13l3 3 3-.3 2.500 4-1 3 1 3-4 14.500c-1 3-8 7.500-11 9-3-1.500-10-6-11-9L1 13.700l1-3-1-3 2.500-4 3 .3z" fill="url(#brv)" />
        <path d="M16 7l5-1 5 5-1 4 1 3-4 5 1 3-7 6-7-6 1-3-4-5 1-3-1-4 5-5z" fill="#fff" />
        <path d="M8 13l5 1.500L12 19l-4-2zM24 13l-5 1.500 1 4.500 4-2zM13 24l3-1.500 3 1.500-3 3z" fill="#fb3a10" /><path d="M16 7v8M14.500 15L16 22l1.500-7" stroke="#fb3a10" strokeWidth="1" />
      </Svg>
      <Svg w={34} h={30} c="ml-[42px]">
        <path d="M1 2h12l3 3.500H1z" fill="#e5a50f" /><path d="M1 6h12l3-1.500h16.500v22.500H1z" fill="#ffd768" /><path d="M6 15h21v13H6z" fill="#3c96d8" /><path d="M13 28v-7h8v7z" fill="#ffe08a" />
      </Svg>
      <TaskApp w="w-[61px]" c="ml-[28px]">
        <Svg w={37} h={38}>
          <defs>
            <linearGradient id="eg1" x1="0" y1=".3" x2="1" y2=".5"><stop offset="0" stopColor="#1c8fe0" /><stop offset=".55" stopColor="#2ec6c2" /><stop offset="1" stopColor="#6be05a" /></linearGradient>
            <linearGradient id="eg2" x1="0" y1="0" x2="0" y2="1"><stop offset="0" stopColor="#1b9de2" /><stop offset="1" stopColor="#0c4a9c" /></linearGradient>
          </defs>
          <path d="M1 17C2 7 9 1 18.500 1 29 1 37 9 37 18c0 6-5 9-10 9-6 0-7-3-5-6 1-3-1-8-6-8-7-1-12 1-15 4z" fill="url(#eg1)" />
          <path d="M1 18c2-6 9-7 14-5-4 2-5 8-3 13 3 6 13 8 21 2-3 6-9 9.500-15 9.500C8 37.500 0 30 1 18z" fill="url(#eg2)" />
          <rect x="0" y="26" width="19" height="12" fill="#b86a10" /><path d="M6 26v-3h7v3" stroke="#7a4306" strokeWidth="1.600" /><path d="M0 31h19" stroke="#7a4306" /><rect x="8" y="30" width="3" height="4" fill="#ffd04a" />
        </Svg>
      </TaskApp>
      <TaskApp w="w-[61px]" c="ml-[14px]">
        <Svg w={37} h={32}>
          <path d="M9 10L21 1l8 4-14 12H9z" fill="#28a8ea" /><path d="M14 8l7-7 15 10v3L24 22z" fill="#1478d4" /><path d="M36 12v16a3 3 0 0 1-3 3H13a3 3 0 0 1-3-3z" fill="#3cc6f4" /><path d="M17 20L29 6l7 5v3L21 26z" fill="#0e4a9f" /><path d="M10 17l20 14H13a3 3 0 0 1-3-3z" fill="#1490df" />
          <rect x="0" y="7" width="18" height="18" rx="1.500" fill="#0f6cbd" /><text x="9" y="21" textAnchor="middle" fontSize="14" fontWeight="700" fill="#fff" fontFamily="Open Sans">O</text>
        </Svg>
      </TaskApp>
      <TaskApp w="w-[61px]" c="ml-[14px]">
        <Svg w={40} h={40} c="mt-0.5">
          <circle cx="19" cy="6.500" r="5" fill="#7b83eb" /><circle cx="30" cy="8.500" r="4" fill="#5059c9" /><path d="M23 13h13v10a7 7 0 0 1-13 3z" fill="#5059c9" /><path d="M9 13h18v12a9 9 0 0 1-18 0z" fill="#7b83eb" />
          <rect x="0" y="9" width="18" height="18" rx="1.500" fill="#4b53bc" /><text x="9" y="23.500" textAnchor="middle" fontSize="15" fontWeight="600" fill="#fff" fontFamily="Open Sans">T</text>
          <circle cx="27.500" cy="27.500" r="12" fill="#13a10e" /><path d="M22.500 27.500l3.500 3.500 6-6.500" stroke="#fff" strokeWidth="2" />
        </Svg>
      </TaskApp>
      <TaskApp w="w-[61px]" c="ml-[14px]">
        <Svg w={36} h={34}>
          <path d="M4 5v19c0 3 17 3 17-2V5z" fill="#ffd400" /><path d="M15 5h6v17l-6 3z" fill="#f0b800" /><ellipse cx="12.500" cy="5" rx="8.500" ry="4" fill="#f4a653" />
          <path d="M25 2h7v8M2 25v7h7" stroke="#3f9c48" strokeWidth="3" /><path d="M15 17l14 15M31 18L16 32M14 20l4-4M26 17c0 5 5 6 7 2" stroke="#a75fcb" strokeWidth="2.200" />
        </Svg>
      </TaskApp>
      <TaskApp w="w-[61px]" c="ml-[14px]">
        <Svg w={36} h={36}>
          <path d="M26 .5L35 4.500v27l-9 4z" fill="#22a0ee" /><path d="M26 .5v9.500L5 27.500 1 24z" fill="#0a6fbd" /><path d="M26 35.500V26L5 8.500 1 12z" fill="#0f86d2" />
        </Svg>
      </TaskApp>
      <TaskApp w="w-[61px]" c="ml-[14px]">
        <Svg w={36} h={36}>
          <circle cx="18" cy="18" r="17.500" fill="#fbc116" /><path d="M18 18L2.500 10A17.500 17.500 0 0 1 33.500 9.500H18z" fill="#dd3b2f" /><path d="M2.700 9.500A17.500 17.500 0 0 0 17 35.500L25 22l-7-4-7 4z" fill="#2a9e48" /><path d="M2.700 9.500L11 22l7-12.500z" fill="#2a9e48" /><path d="M2.700 9.500l5.500 5.500L18 9.500z" fill="#dd3b2f" />
          <circle cx="18" cy="18" r="8.800" fill="#fff" /><circle cx="18" cy="18" r="7" fill="#3a7cec" />
        </Svg>
      </TaskApp>
      <TaskApp w="w-[73px]" c="ml-[8px] pr-px" on><PptLogo w={36} /></TaskApp>
      <div className="relative ml-[102px] h-9 w-[38px] shrink-0">
        <Svg w={38} h={38}>
          <defs><linearGradient id="cloud" x1="0" y1="0" x2="0" y2="1"><stop offset="0" stopColor="#b8d4fb" /><stop offset="1" stopColor="#7398e2" /></linearGradient></defs>
          <path d="M15 1c-2 10-5 16-14 18 6 5 18 1 19-6 1-4-1-9-5-12z" fill="#f7a823" /><path d="M9 36a8 8 0 0 1-1-15c2-8 17-9 20-1 12-1 13 16 2 16z" fill="url(#cloud)" />
        </Svg>
        <div className="absolute left-[19px] top-0 flex size-[18px] items-center justify-center rounded-full bg-[#c42b1c] text-[12px] font-bold leading-none text-white">8</div>
      </div>
      <Fit t="21°C" c="ml-[13px] mt-px w-[43px] text-[19px] leading-7" />
      <Svg w={20} h={12} c="ml-[44px]"><path d="M1 10.500L10 1.500l9 9" stroke="#111" strokeWidth="1.600" /></Svg>
      <Svg w={20} h={20} c="ml-[30px]"><path d="M1 18C1 9 9 1 18 1" stroke="#8b9a84" strokeWidth="1.400" /><path d="M5.500 18C5.500 11 11 6 18 6M9.500 18c0-4 4-8 8.500-8" stroke="#111" strokeWidth="1.400" /><path d="M13.500 18c0-2 2-4 4.500-4" stroke="#111" strokeWidth="1.300" /><circle cx="17" cy="17.500" r="1.500" fill="#111" /></Svg>
      <Svg w={24} h={20} c="ml-[24px]"><path d="M1 6.500h4L10 1.500v17l-5-5H1zM13 7c1.500 2 1.500 4 0 6M16 4.500c3 3.500 3 7.500 0 11M19.500 2c4 5 4 11 0 16" stroke="#111" strokeWidth="1.400" /></Svg>
      <Svg w={26} h={18} c="ml-[23px]"><path d="M11 3.500h11.500v13H6V12M24.500 7v6" stroke="#111" strokeWidth="1.400" /><path d="M2.500 0v4M6.500 0v4M1 4h7v3.500a3.500 3.500 0 0 1-7 0zM4.500 11v6" stroke="#111" strokeWidth="1.400" /><path d="M6 8h5v7H6z" fill="#111" /></Svg>
      <div className="ml-[22px] w-[33px] shrink-0 pt-px">
        <Fit t="ENG" c="w-[33px] text-[17px] leading-[27px]" />
        <Fit t="IN" c="ml-[8px] w-[17px] text-[17px] leading-[27px]" />
      </div>
      <div className="ml-[21px] w-[93px] shrink-0">
        <Fit t="23:14" c="ml-[25px] w-[43px] text-[17px] leading-[27px]" />
        <Fit t="07-10-2025" c="w-[93px] text-[17px] leading-[27px]" />
      </div>
      <Svg w={26} h={26} c="ml-[27px]"><path d="M1.500 1.500h23v17.500H17L13 24l-4-5H1.500z" stroke="#111" strokeWidth="1.500" /></Svg>
      <div className="ml-[28px] h-full w-px bg-[#b9c6a6]" />
    </footer>
  );
}

export default function App() {
  return (
    <div className="flex h-[1080px] w-[1920px] flex-col overflow-hidden bg-[#efefef] font-['Open_Sans',sans-serif]">
      <TitleBar />
      <Tabs />
      <Ribbon />
      <main className="flex h-[720px] shrink-0">
        <SlidePanel />
        <div className="flex w-[1617px] flex-col">
          <div className="ml-[3px] flex h-[672px] border-b border-[#d0d0d0]">
            <div className="ml-[261px] pt-[7px]"><Slide /></div>
            <div className="ml-auto flex w-[26px] flex-col items-center pt-[8px]">
              <Tri />
              <div className="mt-[97px] h-[88px] w-3 shrink-0 rounded-full bg-[#707070]" />
              <Tri down c="mt-[368px]" />
              <Tri c="mt-[10px]" />
              <Tri c="-mt-[2px]" />
              <Tri down c="mt-[6px]" />
              <Tri down c="-mt-[2px]" />
            </div>
          </div>
          <div className="flex h-12 items-center">
            <Fit t="Click to add notes" c="mb-[4px] ml-[17px] w-[174px] text-[21.500px] leading-8 text-[#5c5c5c]" />
            <div className="ml-auto flex h-[46px] w-[26px] flex-col items-center justify-center gap-[13px] rounded-xl bg-[#f5f5f5]">
              <Tri s={12} />
              <Tri s={12} down />
            </div>
          </div>
        </div>
      </main>
      <StatusBar />
      <Taskbar />
    </div>
  );
}
